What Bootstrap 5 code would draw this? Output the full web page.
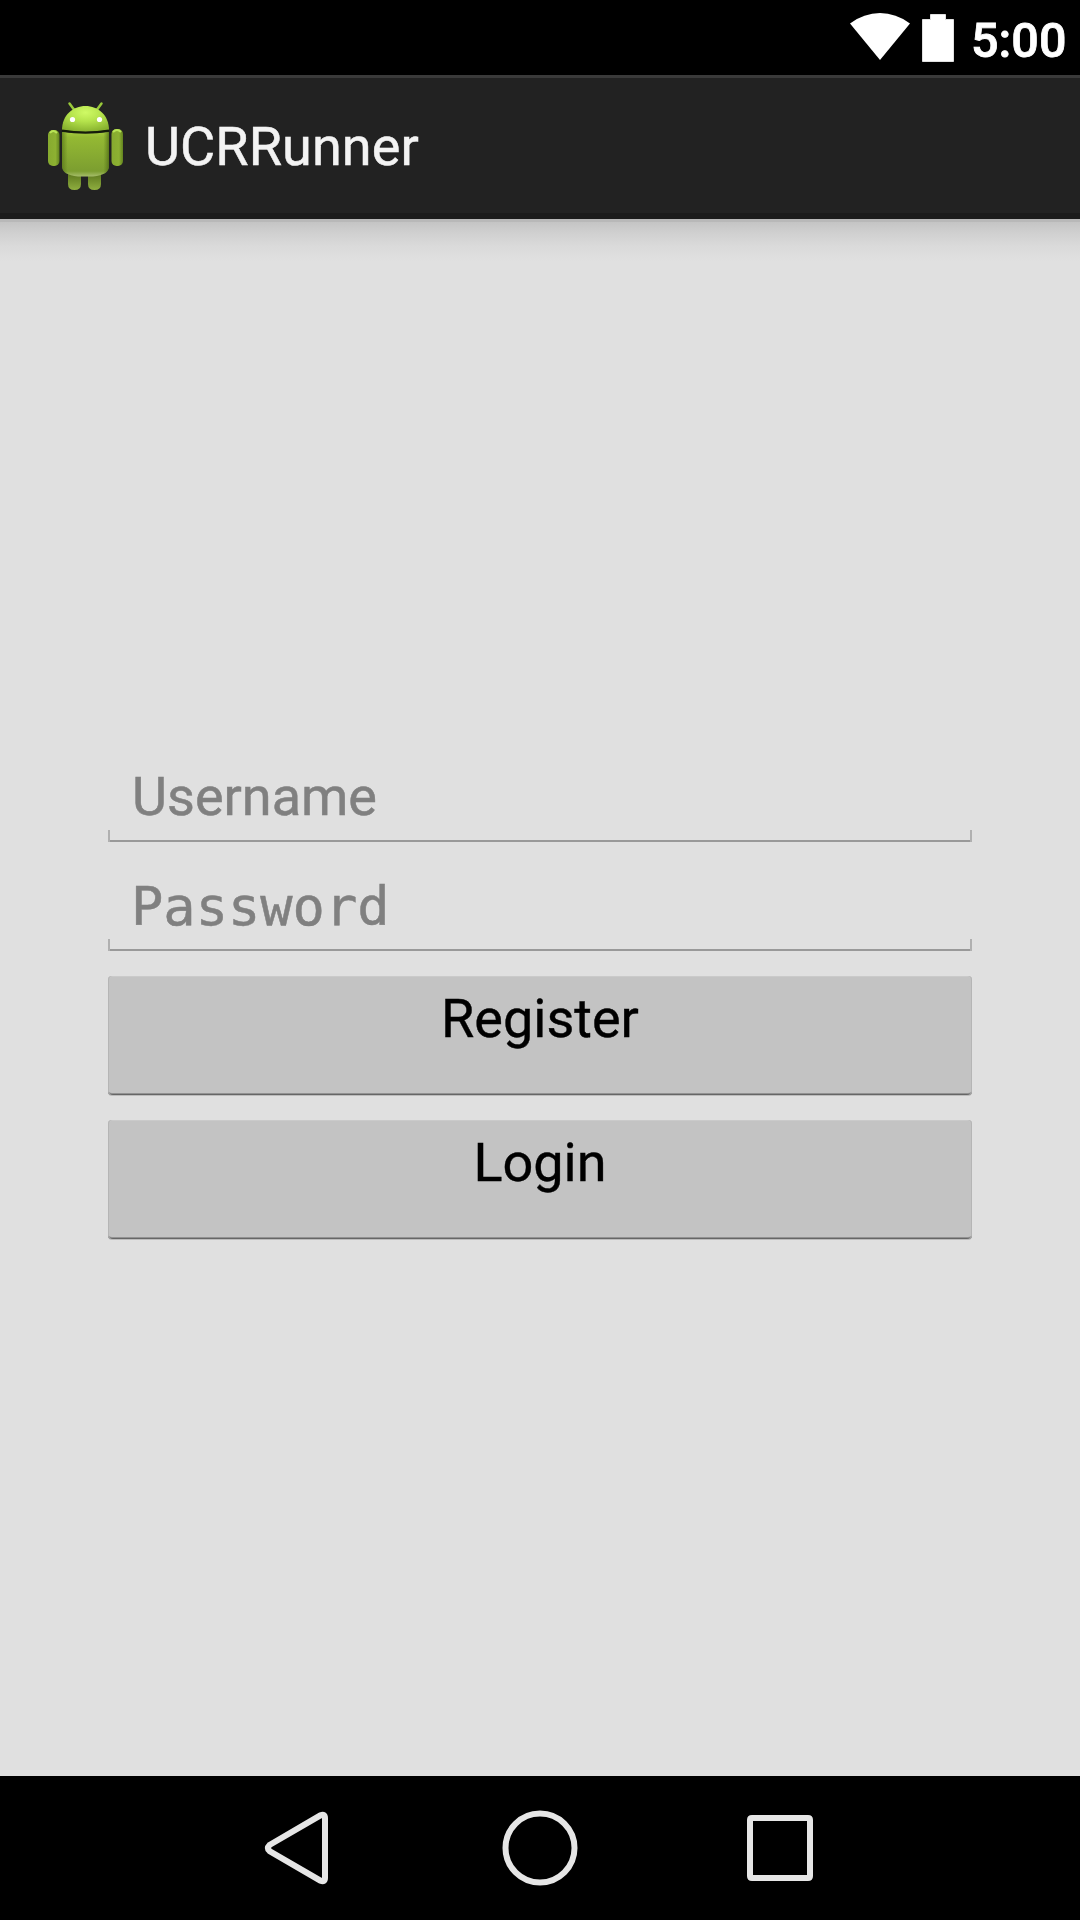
<!DOCTYPE html>
<html lang="en">
<head>
<meta charset="utf-8">
<meta name="viewport" content="width=device-width, initial-scale=1">
<title>UCRRunner</title>
<link href="https://cdn.jsdelivr.net/npm/bootstrap@5.3.0/dist/css/bootstrap.min.css" rel="stylesheet">
<style>
body { width:1080px; height:1920px; background:#e0e0e0; font-family:Roboto,"Liberation Sans",sans-serif; font-size:54px; line-height:64px; overflow:hidden; }
svg { display:block; flex:none; }
.status-bar { height:75px; background:#000; color:#fff; padding-right:14px; }
.clock { width:95px; font-size:48.500px; font-weight:500; -webkit-text-stroke:.8px currentColor; line-height:56px; padding-top:13px; margin-left:16px; white-space:nowrap; }
.action-bar { height:144px; background:#222; border-top:3px solid #3a3a3a; border-bottom:6px solid #1b1b1b; color:#f3f3f3; padding:0 0 0 36px; }
.app-title { margin-left:13px; padding-top:2px; -webkit-text-stroke:.5px currentColor; letter-spacing:.08px; }
.screen { background:linear-gradient(#b8b8b8 0,#b8b8b8 3px,#c4c4c4 3px,#d0d0d0 14px,#dadada 27px,#e0e0e0 42px); padding:540px 108px 0; }
.holo-field { height:109px; padding:5px 24px 40px; margin:0; background:linear-gradient(#999,#999) 2px 81px/860px 2px no-repeat,linear-gradient(#b0b0b0,#b0b0b0) 0 71px/2px 12px no-repeat,linear-gradient(#b0b0b0,#b0b0b0) 100% 71px/2px 12px no-repeat; border:0; border-radius:0; color:#808080; font-size:54px; line-height:64px; outline:0; width:100%; display:block; -webkit-text-stroke:.5px #808080; }
.holo-field::placeholder { color:#808080; opacity:1; }
.mono-field { padding:6px 23px 39px; font-family:"DejaVu Sans Mono",monospace; font-size:53.7px; }
.holo-btn { height:119px; margin-bottom:25px; border:0; border-radius:4px; background:#c3c3c3; color:#000; font-size:54px; line-height:64px; padding:11px 0 0; -webkit-text-stroke:.4px currentColor; box-shadow:inset 1px 0 #b5b5b5,inset -1px 0 #b5b5b5,inset 0 1px #cacaca,inset 0 -1px #666,inset 0 -2px #929292,0 1px #bcbcbc; }
.actions { margin-top:-1px; }
.nav-keys { height:144px; background:#000; padding:0 180px; }
</style>
</head>
<body class="d-flex flex-column">
<header class="status-bar d-flex align-items-start justify-content-end">
  <svg width="106" height="75" viewBox="849 0 106 75"><path d="M850 23.5Q864 13 880 13Q896 13 910 23.5L880 60Z" fill="#fff"/><path d="M930.500 14.500h15v5h8v42h-31v-42h8z" fill="#fff" stroke="#e0e0e0"/></svg>
  <span class="clock">5:00</span>
</header>
<div class="action-bar d-flex align-items-center">
  <svg width="96" height="96" viewBox="36 98 96 96">
    <defs>
      <radialGradient id="head" cx=".5" cy=".25" r=".75"><stop offset="0" stop-color="#cffa65"/><stop offset=".45" stop-color="#b5e34c"/><stop offset="1" stop-color="#88b22f"/></radialGradient>
      <linearGradient id="torso" x2="0" y2="1"><stop offset="0" stop-color="#a4ca3e"/><stop offset=".12" stop-color="#94b933"/><stop offset=".88" stop-color="#7c9e30"/><stop offset="1" stop-color="#a6bd6b"/></linearGradient>
      <linearGradient id="side"><stop offset="0" stop-color="#567417" stop-opacity=".7"/><stop offset=".12" stop-color="#567417" stop-opacity="0"/><stop offset=".88" stop-color="#567417" stop-opacity="0"/><stop offset="1" stop-color="#466111" stop-opacity=".7"/></linearGradient>
      <linearGradient id="arm"><stop offset="0" stop-color="#86aa2f"/><stop offset=".65" stop-color="#8db132"/><stop offset="1" stop-color="#62831f"/></linearGradient>
      <linearGradient id="leg" x2="0" y2="1"><stop offset="0" stop-color="#526d16"/><stop offset="1" stop-color="#8fae40"/></linearGradient>
    </defs>
    <path d="M69.500 103.500L75 111M101.500 103.500L96 111" stroke="#98c83a" stroke-width="2.500" stroke-linecap="round"/>
    <path d="M68 170h13v14q0 6-6.500 6T68 184zM88 170h13v14q0 6-6.500 6T88 184z" fill="url(#leg)"/>
    <rect x="48" y="130" width="11.500" height="36" rx="5" fill="url(#arm)"/><rect x="111.500" y="129" width="11.500" height="37" rx="5" fill="url(#arm)"/>
    <path d="M50 133q3-4 7 0M113 132q4-4 8 0" stroke="#b9e456" stroke-width="2" fill="none"/>
    <path d="M62 132q23.500 3 47 0v34q0 9-16 10.500H78Q62 175 62 166z" fill="url(#torso)"/>
    <path d="M62 132q23.500 3 47 0v34q0 9-16 10.500H78Q62 175 62 166z" fill="url(#side)"/>
    <path d="M62 130C62 115 73 106 85.500 106S109 115 109 130Q85.500 134 62 130z" fill="url(#head)"/>
    <path d="M62 130.500Q85.500 134.500 109 130.500" stroke="#151c0a" stroke-width="2.200" fill="none"/>
    <circle cx="72.500" cy="119.500" r="2.600" fill="#fff"/><circle cx="99.500" cy="119.500" r="2.600" fill="#fff"/>
  </svg>
  <span class="app-title">UCRRunner</span>
</div>
<main class="screen flex-grow-1">
  <form class="d-flex flex-column">
    <input class="holo-field" type="text" placeholder="Username" aria-label="Username">
    <input class="holo-field mono-field" type="password" placeholder="Password" aria-label="Password">
    <div class="actions d-flex flex-column">
      <button class="holo-btn btn d-flex align-items-start justify-content-center" type="button">Register</button>
      <button class="holo-btn btn d-flex align-items-start justify-content-center" type="button">Login</button>
    </div>
  </form>
</main>
<footer class="nav-keys d-flex">
  <svg width="240" height="144" viewBox="180 1776 240 144" fill="none" stroke="#e6e6e6" stroke-width="6"><path d="M269.500 1845L320.500 1815.300Q325 1813.500 325 1818V1878Q325 1882.500 320.500 1880.700L269.500 1851Q266.500 1848 269.500 1845Z"/></svg>
  <svg width="240" height="144" viewBox="420 1776 240 144" fill="none" stroke="#e6e6e6" stroke-width="6"><circle cx="540" cy="1848" r="34.500"/></svg>
  <svg width="240" height="144" viewBox="660 1776 240 144"><path fill="#e6e6e6" fill-rule="evenodd" d="M752 1815h56q5 0 5 5v56q0 5-5 5h-56q-5 0-5-5v-56q0-5 5-5zM753 1821v54h54v-54z"/></svg>
</footer>
<script src="https://cdn.jsdelivr.net/npm/bootstrap@5.3.0/dist/js/bootstrap.bundle.min.js"></script>
</body>
</html>
